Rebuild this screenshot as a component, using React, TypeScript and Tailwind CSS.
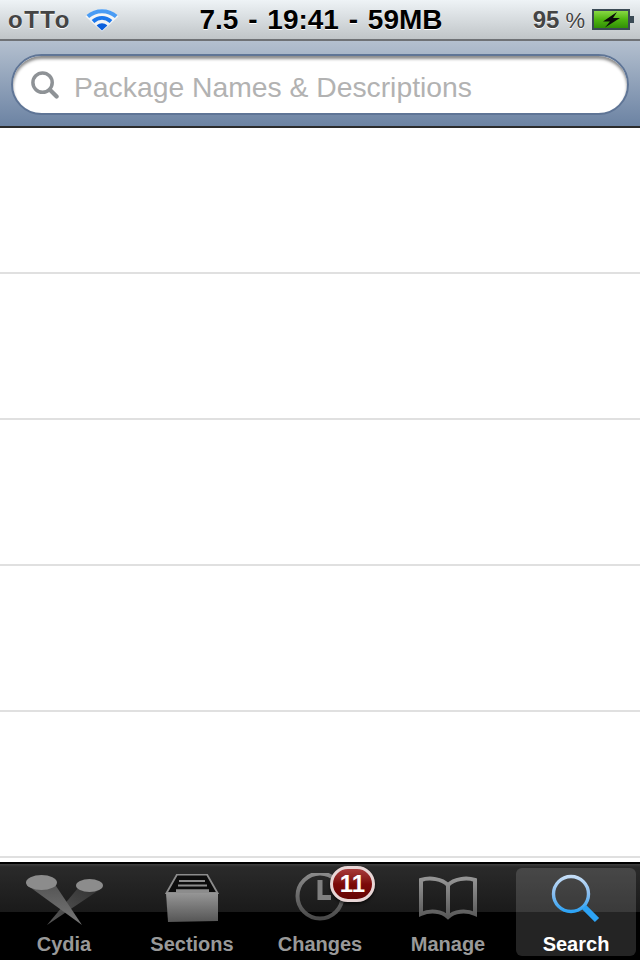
import React from 'react';

const WifiIcon = () => (
  <svg width="34" height="25" viewBox="0 0 34 25" className="ml-[14px]">
    <path d="M0.5 9.5 L17 24.5 L33.5 9.5 C24 -0.5 10 -0.5 0.5 9.5 Z" fill="#ffffff" opacity="0.7" />
    <path d="M2.8 9.6 C11 2.4 23 2.4 31.2 9.6" fill="none" stroke="#4a9cf4" strokeWidth="4" />
    <path d="M8 14.6 C13.5 9.8 20.5 9.8 26 14.6" fill="none" stroke="#1c78ec" strokeWidth="4" />
    <path d="M17 23.5 L11.6 18.4 C15 15.4 19 15.4 22.4 18.4 Z" fill="#0a5fdc" />
  </svg>
);

const BatteryIcon = () => (
  <svg width="42" height="21" viewBox="0 0 42 21">
    <defs>
      <linearGradient id="bat" x1="0" y1="0" x2="0" y2="1">
        <stop offset="0" stopColor="#8fdc4a" />
        <stop offset="0.5" stopColor="#4fb510" />
        <stop offset="1" stopColor="#2d8a06" />
      </linearGradient>
    </defs>
    <rect x="1" y="1" width="36" height="19" fill="url(#bat)" stroke="#3a4a55" strokeWidth="2" />
    <rect x="38" y="7" width="4" height="7" fill="#3a4a55" />
    <path d="M25 3 L11 12.5 L18 12.5 L13 18.5 L28 9 L21 9 Z" fill="#0a0a0a" />
  </svg>
);

const SearchGlyph = () => (
  <svg width="29" height="29" viewBox="0 0 30 30">
    <circle cx="13" cy="13" r="10" fill="none" stroke="#8e9296" strokeWidth="3.6" />
    <path d="M20.5 20.5 L27.5 27.5" stroke="#8e9296" strokeWidth="4.4" strokeLinecap="round" />
  </svg>
);

const CydiaIcon = () => (
  <svg width="80" height="54" viewBox="0 0 80 54">
    <defs>
      <linearGradient id="beamA" x1="0" y1="0" x2="0" y2="1">
        <stop offset="0" stopColor="#555555" />
        <stop offset="1" stopColor="#777777" />
      </linearGradient>
      <linearGradient id="beamB" x1="1" y1="0" x2="0" y2="1">
        <stop offset="0" stopColor="#333333" />
        <stop offset="1" stopColor="#6e6e6e" />
      </linearGradient>
    </defs>
    <path d="M54 16 L78 16 L23 53 Z" fill="url(#beamB)" opacity="0.8" />
    <path d="M3 13 L32 14 L58 53 Z" fill="url(#beamA)" />
    <ellipse cx="17.5" cy="10.5" rx="15.5" ry="7.5" fill="#8c8c8c" />
    <ellipse cx="65.5" cy="13.5" rx="13.5" ry="6.5" fill="#8c8c8c" />
  </svg>
);

const SectionsIcon = () => (
  <svg width="54" height="50" viewBox="0 2 54 50">
    <defs>
      <linearGradient id="box" x1="0" y1="0" x2="0" y2="1">
        <stop offset="0" stopColor="#969696" />
        <stop offset="1" stopColor="#555555" />
      </linearGradient>
    </defs>
    <path d="M1.5 21 L12 2.5 L42 2.5 L52.5 21 Z" fill="#0c0c0c" stroke="#8c8c8c" strokeWidth="1.8" />
    <path d="M14 8 H40 V10 H14 Z M13 12.4 H42 V14.6 H13 Z M11 17.2 H44 V20.8 H11 Z" fill="#8c8c8c" />
    <path d="M1 21 H53 V49 L3 50 Z" fill="url(#box)" />
  </svg>
);

const ClockIcon = () => (
  <svg width="52" height="52" viewBox="0 3 52 52">
    <defs>
      <linearGradient id="clock" x1="0" y1="0" x2="0" y2="1">
        <stop offset="0" stopColor="#8a8a8a" />
        <stop offset="1" stopColor="#4a4a4a" />
      </linearGradient>
    </defs>
    <circle cx="26" cy="26" r="22.5" fill="none" stroke="url(#clock)" strokeWidth="4" />
    <path d="M23.5 10 H28.5 V25 H37 V30 H23.5 Z" fill="#808080" />
  </svg>
);

const BookIcon = () => (
  <svg width="60" height="46" viewBox="0 0 60 46">
    <defs>
      <linearGradient id="book" x1="0" y1="0" x2="0" y2="1">
        <stop offset="0" stopColor="#949494" />
        <stop offset="1" stopColor="#5a5a5a" />
      </linearGradient>
    </defs>
    <path
      d="M30 9 C24 3 12 1 3 4 V38 C12 34 24 35 30 41 C36 35 48 34 57 38 V4 C48 1 36 3 30 9 Z M30 9 V41"
      fill="none"
      stroke="url(#book)"
      strokeWidth="4"
    />
  </svg>
);

const SearchTabIcon = () => (
  <svg width="52" height="52" viewBox="0 0 52 52">
    <defs>
      <linearGradient id="lens" x1="0" y1="0" x2="0" y2="1">
        <stop offset="0" stopColor="#c4ddf6" />
        <stop offset="0.5" stopColor="#88bdf0" />
        <stop offset="1" stopColor="#2da3f5" />
      </linearGradient>
    </defs>
    <circle cx="21" cy="21" r="17.5" fill="none" stroke="url(#lens)" strokeWidth="3.4" />
    <path d="M34 34 L47 47" stroke="#2da3f5" strokeWidth="6" />
  </svg>
);

const tabs = [
  { label: 'Cydia', icon: <CydiaIcon /> },
  { label: 'Sections', icon: <SectionsIcon /> },
  { label: 'Changes', icon: <ClockIcon />, badge: '11' },
  { label: 'Manage', icon: <BookIcon /> },
  { label: 'Search', icon: <SearchTabIcon />, active: true },
];

const App = () => {
  return (
    <div className="flex flex-col h-[960px] w-[640px] overflow-hidden bg-white font-['Liberation_Sans',Arial,sans-serif]">
      {/* Status bar */}
      <div className="h-[41px] shrink-0 flex items-center pl-[8px] pr-[6px] bg-gradient-to-b from-[#eef3f6] to-[#c0c5c8] border-b-2 border-[#6f7276]">
        <div className="flex-1 flex items-center">
          <span className="text-[24px] tracking-[1.5px] font-bold text-[#444444] leading-none [text-shadow:0_1px_0_#ffffff]">oTTo</span>
          <WifiIcon />
        </div>
        <span className="text-[28px] [word-spacing:2px] font-bold text-black leading-none whitespace-nowrap [text-shadow:0_1px_0_#ffffff]">7.5 - 19:41 - 59MB</span>
        <div className="flex-1 flex items-center gap-[7px] justify-end">
          <span className="text-[24px] font-bold text-[#444444] leading-none whitespace-nowrap [text-shadow:0_1px_0_#ffffff]">
            95<span className="ml-[6px] text-[22px] font-normal">%</span>
          </span>
          <BatteryIcon />
        </div>
      </div>

      {/* Search bar */}
      <div className="h-[87px] shrink-0 px-[11px] pt-[13px] bg-gradient-to-b from-[#b4c0cf] to-[#6c83a3] border-b-2 border-[#2b2b2b]">
        <div className="h-[61px] rounded-full bg-white border-2 border-[#5f7596] shadow-[inset_0_3px_3px_rgba(0,0,0,0.45)] flex items-center pl-[17px]">
          <SearchGlyph />
          <span className="ml-[15px] mt-[5px] text-[28.3px] text-[#b2b2b2] leading-none whitespace-nowrap">Package Names &amp; Descriptions</span>
        </div>
      </div>

      {/* Empty list rows */}
      <div className="flex-1 min-h-0 overflow-hidden">
        {[0, 1, 2, 3, 4].map((i) => (
          <div key={i} className="h-[146px] border-b-2 border-[#e0e0e0]" />
        ))}
      </div>

      {/* Tab bar */}
      <div className="h-[98px] shrink-0 border-t-2 border-black bg-[linear-gradient(to_bottom,#3f3f3f_0px,#2a2a2a_3px,#1a1a1a_48px,#000000_48px,#000000_100%)] flex pt-[4px]">
        {tabs.map((tab) => (
          <div key={tab.label} className="flex-1 px-[4px]">
            <div
              className={
                tab.active
                  ? 'relative h-[88px] rounded-[6px] bg-white/[0.14] flex flex-col items-center'
                  : 'relative h-[88px] flex flex-col items-center'
              }
            >
              <div className="h-[64px] flex items-center justify-center">{tab.icon}</div>
              <span
                className={
                  tab.active
                    ? 'mt-[3px] text-[20px] leading-[24px] font-bold text-white'
                    : 'mt-[3px] text-[20px] leading-[24px] font-bold text-[#999999]'
                }
              >
                {tab.label}
              </span>
              {tab.badge && (
                <span className="absolute top-[-2px] left-[70px] w-[45px] h-[36px] rounded-full border-[3px] border-[#e8d6d6] bg-gradient-to-b from-[#a83a3a] via-[#7c0a0a] to-[#650505] shadow-[0_2px_3px_rgba(0,0,0,0.6)] flex items-center justify-center text-[24px] font-bold text-white leading-none">
                  {tab.badge}
                </span>
              )}
            </div>
          </div>
        ))}
      </div>
    </div>
  );
};

export default App;
